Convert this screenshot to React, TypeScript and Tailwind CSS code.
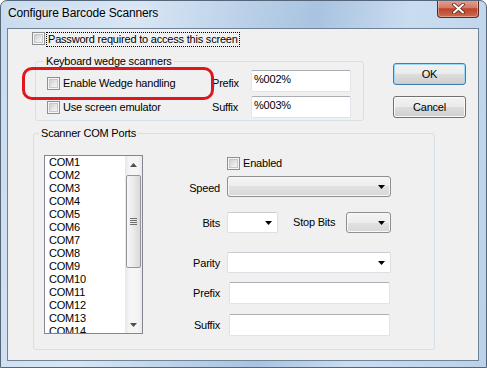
import React from 'react'

const font = "font-['Liberation_Sans',Arial,sans-serif] text-[11px] leading-[13px] tracking-[-0.2px] text-black"

function Check() {
  return (
    <span className="flex h-[13px] w-[13px] shrink-0 items-center justify-center border border-[#8f8f8f] bg-[#f6f6f6]">
      <span className="h-[9px] w-[9px] border border-[#c4c7cb] bg-[linear-gradient(135deg,#cdd0d4,#f8f8f8)]" />
    </span>
  )
}

function DropArrow() {
  return (
    <svg width="7" height="4" viewBox="0 0 7 4" className="shrink-0">
      <path d="M0 0h7L3.5 4z" fill="#000" />
    </svg>
  )
}

function Combo({ width, gray }: { width: string; gray?: boolean }) {
  return (
    <div
      className={
        gray
          ? `flex h-[21px] ${width} items-center justify-end rounded-[3px] border border-[#8e8f8f] bg-[linear-gradient(#f4f4f4_0%,#ededed_50%,#e1e1e1_50%,#d8d8d8_100%)] pr-[5px] shadow-[inset_0_0_0_1px_#f8f8f8]`
          : `flex h-[21px] ${width} items-center justify-end rounded-[2px] border border-[#dcdfe4] border-t-[#c9ccd2] bg-white pr-[5px]`
      }
    >
      <DropArrow />
    </div>
  )
}

function TextBox({ width, value }: { width: string; value?: string }) {
  return (
    <div
      className={`h-[22px] ${width} shrink-0 rounded-[2px] border border-[#e2e3ea] border-t-[#abadb3] bg-white pl-[2px] pt-[2px]`}
    >
      {value}
    </div>
  )
}

function ScrollTri({ down }: { down?: boolean }) {
  return (
    <svg width="7" height="4" viewBox="0 0 7 4">
      <path d={down ? 'M0 0h7L3.5 4z' : 'M0 4h7L3.5 0z'} fill="#4e4e4e" />
    </svg>
  )
}

const ports = Array.from({ length: 14 }, (_, i) => `COM${i + 1}`)

export default function App() {
  return (
    <div className={`flex h-[368px] w-[487px] flex-col overflow-hidden rounded-t-[7px] border border-[#55657a] bg-[linear-gradient(100deg,#c9dbef_0%,#d8e6f4_25%,#b6cde6_48%,#a9c3e0_58%,#cadcf0_75%,#bcd1e9_100%)] pb-[6px] pl-[6px] pr-[7px] ${font}`}>
      {/* title bar */}
      <div className="flex h-[27px] shrink-0 items-start">
        <div className="ml-[1px] mt-[5px] text-[12px] leading-[15px] tracking-[-0.15px] [text-shadow:0_0_6px_#fff]">
          Configure Barcode Scanners
        </div>
        <div className="flex-1" />
        <div className="-mt-[1px] flex h-[18px] w-[42px] items-center justify-center rounded-b-[4px] border border-t-0 border-[#5a2a24] bg-[linear-gradient(#e6a392_0%,#d67a66_45%,#bb432d_52%,#cf6a4e_100%)] shadow-[inset_0_0_0_1px_rgba(255,255,255,0.35)]">
          <svg width="13" height="11" viewBox="0 0 13 11">
            <path d="M2 1.5l9 8M11 1.5l-9 8" stroke="#5b2620" strokeWidth="3.6" strokeLinecap="round" />
            <path d="M2 1.5l9 8M11 1.5l-9 8" stroke="#fff" strokeWidth="2" strokeLinecap="round" />
          </svg>
        </div>
      </div>

      {/* client area */}
      <div className="h-[333px] w-[472px] shrink-0 border border-[#6f8296] bg-[#f0f0f0]">
        <div className="relative flex flex-col">
          <div className="ml-[24px] mt-[3px] flex h-[15px] items-start">
            <Check />
            <span className="ml-[1px] h-[15px] border border-dotted border-black px-[1px] leading-[13px]">
              Password required to access this screen
            </span>
          </div>

          <div className="mt-[8px] flex items-start">
            <fieldset className="ml-[27px] w-[329px] min-w-0 rounded-[3px] border border-[#d5dfe5]">
              <legend className="ml-[8px] px-[2px] leading-[13px]">Keyboard wedge scanners</legend>
              <div className="flex flex-col gap-[4px] pb-[2px] pl-[11px] pr-[12px] pt-[2px]">
                <div className="flex h-[22px] items-center">
                  <div className="mt-[4px] flex w-[165px] items-center">
                    <Check />
                    <span className="ml-[3px]">Enable Wedge handling</span>
                  </div>
                  <span className="mt-[4px] w-[39px]">Prefix</span>
                  <TextBox width="w-[100px]" value="%002%" />
                </div>
                <div className="flex h-[22px] items-center">
                  <div className="mt-[1px] flex w-[165px] items-center">
                    <Check />
                    <span className="ml-[3px]">Use screen emulator</span>
                  </div>
                  <span className="mt-[1px] w-[39px]">Suffix</span>
                  <TextBox width="w-[100px]" value="%003%" />
                </div>
              </div>
            </fieldset>

            <div className="ml-[29px] mt-[8px] flex flex-col gap-[11px]">
              <button className="flex h-[22px] w-[73px] items-center justify-center rounded-[3px] border border-[#3c7fb1] bg-[linear-gradient(#f2f2f2_0%,#ebebeb_50%,#dddddd_50%,#cfcfcf_100%)] shadow-[inset_0_0_0_1px_#9ed8f7]">
                OK
              </button>
              <button className="flex h-[22px] w-[73px] items-center justify-center rounded-[3px] border border-[#707070] bg-[linear-gradient(#f2f2f2_0%,#ebebeb_50%,#dddddd_50%,#cfcfcf_100%)] shadow-[inset_0_0_0_1px_#fbfbfb]">
                Cancel
              </button>
            </div>
          </div>

          <fieldset className="ml-[25px] mt-[6px] w-[402px] min-w-0 rounded-[3px] border border-[#d5dfe5]">
            <legend className="ml-[5px] px-[2px] leading-[13px]">Scanner COM Ports</legend>
            <div className="flex pb-[13px] pl-[10px] pt-[15px]">
              {/* list box */}
              <div className="flex h-[179px] w-[99px] shrink-0 border border-[#828790] bg-white">
                <div className="flex-1 overflow-hidden pl-[4px]">
                  {ports.map((p) => (
                    <div key={p} className="h-[13px] leading-[13px]">
                      {p}
                    </div>
                  ))}
                </div>
                <div className="flex w-[17px] flex-col bg-[linear-gradient(90deg,#e6e6e6,#f5f5f5_25%,#f5f5f5_75%,#e9e9e9)]">
                  <div className="flex h-[17px] items-center justify-center">
                    <ScrollTri />
                  </div>
                  <div className="mx-auto mt-[2px] flex h-[93px] w-[15px] flex-col items-center justify-center gap-[1px] rounded-[2px] border border-[#969696] bg-[linear-gradient(90deg,#f6f6f6,#ececec_45%,#d9d9d9)]">
                    <span className="h-[1px] w-[7px] bg-[#6f6f6f]" />
                    <span className="h-[1px] w-[7px] bg-[#6f6f6f]" />
                    <span className="h-[1px] w-[7px] bg-[#6f6f6f]" />
                    <span className="h-[1px] w-[7px] bg-[#6f6f6f]" />
                  </div>
                  <div className="flex-1" />
                  <div className="flex h-[17px] items-center justify-center">
                    <ScrollTri down />
                  </div>
                </div>
              </div>

              {/* port settings */}
              <div className="flex flex-col">
                <div className="mt-[2px] flex h-[13px] items-center">
                  <span className="w-[84px]" />
                  <Check />
                  <span className="ml-[3px]">Enabled</span>
                </div>
                <div className="mt-[6px] flex h-[21px] items-center">
                  <span className="mt-[4px] w-[77px] text-right">Speed</span>
                  <span className="w-[7px]" />
                  <Combo width="w-[164px]" gray />
                </div>
                <div className="mt-[15px] flex h-[21px] items-center">
                  <span className="mt-[1px] w-[77px] text-right">Bits</span>
                  <span className="w-[7px]" />
                  <Combo width="w-[51px]" />
                  <span className="ml-[15px] w-[53px]">Stop Bits</span>
                  <Combo width="w-[45px]" gray />
                </div>
                <div className="mt-[19px] flex h-[21px] items-center">
                  <span className="mt-[2px] w-[77px] text-right">Parity</span>
                  <span className="w-[7px]" />
                  <Combo width="w-[164px]" />
                </div>
                <div className="mt-[9px] flex h-[22px] items-center">
                  <span className="mt-[1px] w-[77px] text-right">Prefix</span>
                  <span className="w-[9px]" />
                  <TextBox width="w-[161px]" />
                </div>
                <div className="mt-[10px] flex h-[22px] items-center">
                  <span className="mt-[1px] w-[77px] text-right">Suffix</span>
                  <span className="w-[9px]" />
                  <TextBox width="w-[161px]" />
                </div>
              </div>
            </div>
          </fieldset>

          {/* red annotation */}
          <div className="pointer-events-none absolute left-[14px] top-[38px] h-[33px] w-[192px] rounded-[10px] border-[3px] border-[#e0161e]" />
        </div>
      </div>
    </div>
  )
}
